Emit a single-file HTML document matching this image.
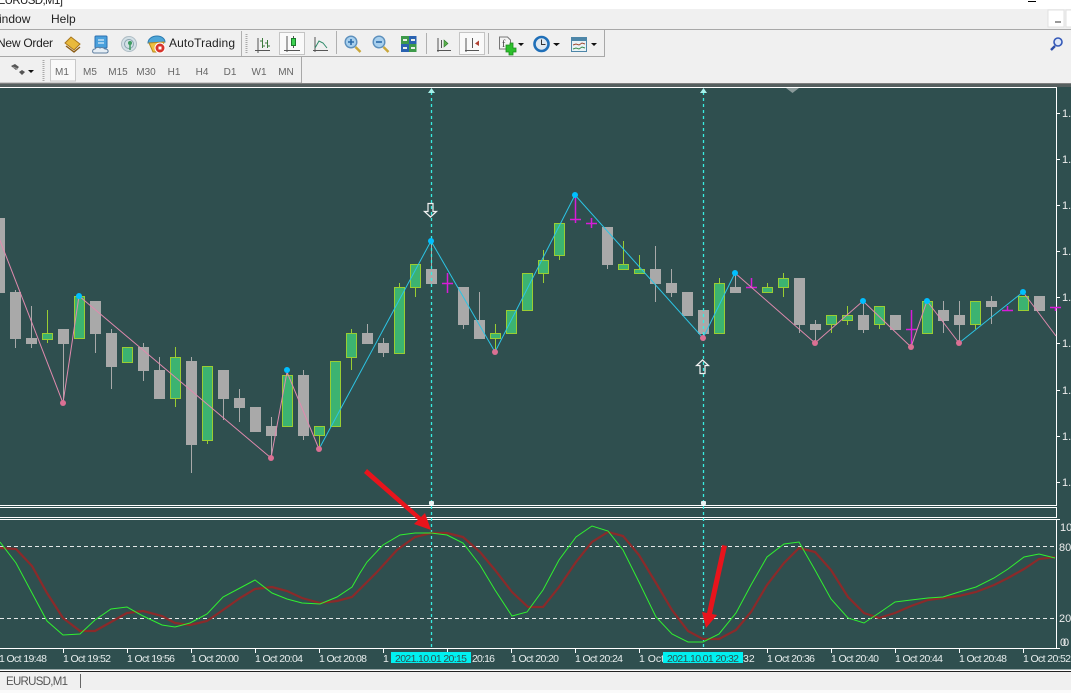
<!DOCTYPE html>
<html><head><meta charset="utf-8"><title>EURUSD,M1</title>
<style>
html,body{margin:0;padding:0;background:#fff;overflow:hidden}
body{width:1071px;height:693px}
svg{display:block;font-family:"Liberation Sans",sans-serif}
.gr{fill:#a9a9a9;stroke:#a9a9a9}
.gn{fill:#3cb371;stroke:#9acd32}
.t{font-size:10.5px;fill:#e8eeee}
.p{font-size:10px;fill:#666;text-anchor:middle}
.r{font-size:11px;fill:#eee}
</style></head><body>
<svg width="1071" height="693" viewBox="0 0 1071 693" xmlns="http://www.w3.org/2000/svg">
<!-- window chrome -->
<rect width="1071" height="693" fill="#f0f0f0"/>
<rect width="1071" height="9" fill="#fff"/>
<text x="-5" y="4" font-size="11.500" fill="#222" textLength="68">[EURUSD,M1]</text>
<rect x="1028" y="1" width="8" height="1" fill="#000"/>
<rect x="1048" y="10" width="16" height="17" fill="#fff" stroke="#e0e0e0"/>
<rect x="1055" y="21" width="6" height="2" fill="#999"/>
<rect x="1066" y="10" width="6" height="17" fill="#fff" stroke="#e0e0e0"/>
<text x="-1" y="23" font-size="12" fill="#222">indow</text>
<text x="51" y="23" font-size="12" fill="#222">Help</text>
<rect y="29" width="1071" height="1" fill="#a8a8a8"/>
<path d="M0 56.500H604.500V30" fill="none" stroke="#a8a8a8"/>
<path d="M0 83H301.500V57" fill="none" stroke="#a8a8a8"/>
<rect y="83" width="1071" height="3" fill="#808080"/>
<rect y="84" width="1071" height="3" fill="#555f5f"/>

<!-- toolbar row 1 -->
<text x="-3" y="47" font-size="12" fill="#222" textLength="56">New Order</text>
<!-- book -->
<path d="M65 43l6-6 9 7-6 6z" fill="#e8b93c" stroke="#a8761c"/><path d="M66 46l8 6 6-5" fill="none" stroke="#8a5a12" stroke-width="1.400"/>
<!-- server cloud -->
<rect x="95" y="36" width="12" height="12" rx="1" fill="#4aa0dc" stroke="#2c6fb0"/>
<path d="M98 40h6M98 43h6" stroke="#fff"/>
<path d="M94 53c-2 0-2-4 1-4 1-2 4-2 5-1 2-1 4 0 5 1 4 0 4 4 1 4z" fill="#e6eef5" stroke="#5f7fa0"/>
<!-- signal -->
<circle cx="129" cy="44" r="7.500" fill="#d3e0e6" stroke="#aebcc4"/><circle cx="129" cy="44" r="4.500" fill="none" stroke="#8ba4b0"/><circle cx="130" cy="43" r="2" fill="#3f9c62"/><path d="M130 44v6" stroke="#3f9c62" stroke-width="1.500"/>
<!-- autotrading -->
<path d="M148 43c0-4 4-7 9-7s8 3 8 6l-17 1z" fill="#4ea6d8" stroke="#2b7bb0"/>
<path d="M149 43l15-1-3 10h-8z" fill="#f0c040" stroke="#b88a20"/>
<circle cx="160" cy="48" r="5" fill="#d8342c" stroke="#fff"/><rect x="158.500" y="46.500" width="3" height="3" fill="#fff"/>
<text x="169" y="47" font-size="12" fill="#222" textLength="66">AutoTrading</text>
<rect x="241" y="31" width="1" height="25" fill="#b0b0b0"/>
<path d="M246.500 34V54" stroke="#aaa" stroke-width="2" stroke-dasharray="1 1"/>
<!-- bar chart -->
<g fill="none" stroke="#555">
<path d="M258 38V53M255 50.500H270"/><path d="M262.500 38V48M260 41h2M263 46h2M267.500 40V48M265 43h2M268 46h2" stroke="#3b7a3b"/>
</g>
<rect x="279.500" y="32.500" width="25" height="22" fill="#f9f9f9" stroke="#c4c4c4"/>
<g fill="none"><path d="M287 36V52M284 50.500H300" stroke="#555"/><path d="M293.500 36V48" stroke="#555"/><rect x="291.500" y="38.500" width="4" height="7" fill="#3cd050" stroke="#1a7a2a"/></g>
<g fill="none"><path d="M315 37V52M313 50.500H328" stroke="#555"/><path d="M315 48l4-7 4 2 4 5" stroke="#2f8a6a"/></g>
<rect x="336" y="31" width="1" height="23" fill="#b0b0b0"/>
<!-- zoom in/out -->
<circle cx="351" cy="42" r="5.800" fill="#a8d0ee" stroke="#5c8fbc" stroke-width="1.400"/><path d="M348 42h6M351 39v6" stroke="#2a6aa8" stroke-width="1.600"/><path d="M355.500 47l5 5" stroke="#c9a73a" stroke-width="2.400"/>
<circle cx="379" cy="42" r="5.800" fill="#a8d0ee" stroke="#5c8fbc" stroke-width="1.400"/><path d="M376 42h6" stroke="#2a6aa8" stroke-width="1.600"/><path d="M383.500 47l5 5" stroke="#c9a73a" stroke-width="2.400"/>
<!-- tile -->
<rect x="401" y="36" width="8" height="8" fill="#3d9a4a"/><rect x="409" y="36" width="7.500" height="8" fill="#2a62b0"/><rect x="401" y="44" width="8" height="8" fill="#2a62b0"/><rect x="409" y="44" width="7.500" height="8" fill="#3d9a4a"/>
<path d="M403 40h4M411 40h4M403 48h4M411 48h4" stroke="#e8f0e8" stroke-width="2"/>
<rect x="426" y="33" width="1" height="21" fill="#b0b0b0"/>
<g fill="none" stroke="#555"><path d="M438 38V52M437 50.500H451"/><path d="M441.500 40V48"/></g><path d="M444 40l4 3.500-4 3.500z" fill="#5ab04a" stroke="#2d7a2d" stroke-width=".6"/>
<rect x="459.500" y="32.500" width="25" height="22" fill="#f9f9f9" stroke="#c4c4c4"/>
<g fill="none" stroke="#555"><path d="M466 38V52M465 50.500H479"/><path d="M472.500 38V48"/></g><path d="M479 40.500l-4 3 4 2.500z" fill="#b04030"/>
<rect x="488" y="33" width="1" height="21" fill="#b0b0b0"/>
<!-- new chart -->
<path d="M499.500 37h8l3 3v9h-11z" fill="#f4f4f4" stroke="#777"/><text x="502" y="47" font-size="10" fill="#444" font-family="Liberation Serif">f</text>
<path d="M506 45h4v-2h3v2h0v3h3v4h-3v3h-4v-3h-3v-4h0z" fill="#2cc02c" stroke="#1c8a1c" stroke-width=".8"/>
<path d="M518 43h6l-3 3z M553 43h7l-3.500 3z M591 43h6l-3 3z" fill="#111"/>
<!-- clock -->
<circle cx="541.500" cy="44" r="7" fill="#dfe8f0" stroke="#1f6fb8" stroke-width="2.600"/><path d="M541.500 39.500V44.500H545.500" fill="none" stroke="#333"/>
<!-- indicators -->
<rect x="571.500" y="37.500" width="15" height="14" fill="#e8f2f6" stroke="#4d86a8"/><rect x="572" y="38" width="14" height="3" fill="#4d86a8"/>
<path d="M573 45l3-1 3 1 3-2 3 1" fill="none" stroke="#a04830"/><path d="M573 49l3-1 3 1 3-2 3 1" fill="none" stroke="#3a8a4a"/>
<!-- search -->
<circle cx="1058" cy="42" r="4" fill="#dfe8f8" stroke="#3358b8" stroke-width="1.600"/><path d="M1055 46l-4 4" stroke="#2c4ea8" stroke-width="2.400"/>

<!-- toolbar row 2 -->
<path d="M11 66l4-2 4 3-3 3zM19 72l3-2 3 2-3 3z" fill="#555"/><path d="M13 67l5 2" stroke="#999"/>
<path d="M28 70h6l-3 3z" fill="#111"/>
<path d="M43.500 60V81" stroke="#aaa" stroke-width="2" stroke-dasharray="1 1"/>
<rect x="50.500" y="59.500" width="25" height="21.500" fill="#f9f9f9" stroke="#c8c8c8"/>
<text class="p" x="62" y="75">M1</text><text class="p" x="90" y="75">M5</text><text class="p" x="118" y="75">M15</text><text class="p" x="146" y="75">M30</text><text class="p" x="174" y="75">H1</text><text class="p" x="202" y="75">H4</text><text class="p" x="230" y="75">D1</text><text class="p" x="259" y="75">W1</text><text class="p" x="286" y="75">MN</text>

<!-- chart background -->
<rect y="87" width="1071" height="584" fill="#2f4f4f"/>
<path d="M0 87.500H1056.500V505.500H0M0 507.500H1056.500V517.500H0M0 519.500H1056.500V648.500H0" fill="none" stroke="#fff"/>
<path d="M786 88h13l-6.500 5z" fill="#8a9a9a"/>

<!-- axis -->
<g stroke="#fff"><path d="M1057 113.500h3M1057 159.500h3M1057 205.500h3M1057 251.500h3M1057 297.500h3M1057 343.500h3M1057 390.500h3M1057 436.500h3M1057 482.500h3M1057 519.500h3M1057 648.500h3"/></g>
<text class="r" x="1062" y="117">1.</text><text class="r" x="1062" y="163">1.</text><text class="r" x="1062" y="209">1.</text><text class="r" x="1062" y="255">1.</text><text class="r" x="1062" y="301">1.</text><text class="r" x="1062" y="347">1.</text><text class="r" x="1062" y="394">1.</text><text class="r" x="1062" y="440">1.</text><text class="r" x="1062" y="486">1.</text>
<text class="r" x="1060" y="531">10</text><text class="r" x="1059" y="551">80</text><text class="r" x="1059" y="622">20</text><text class="r" x="1060" y="646">0</text><text class="r" x="1063" y="646">0</text>

<!-- wicks -->
<path stroke="#a9a9a9" fill="none" d="M15.500 290V348M31.500 306V348M63.500 329V403M95.500 301V353M111.500 329V389M143.500 343V381M159.500 357V398M191.500 357V473M223.500 370V420M239.500 389V422M271.500 417V457M303.500 370V440M367.500 324V343M383.500 338V357M431.500 241V283M463.500 287V329M479.500 292V338M607.500 227V269M655.500 246V302M671.500 269V297M703.500 310V338M735.500 273V292M799.500 278V333M815.500 320V343M863.500 301V333M943.500 301V333M959.500 301V343M991.500 296V324"/>
<path stroke="#9acd32" fill="none" d="M47.500 310V343M175.500 347V407M207.500 440V444M287.500 372V426M319.500 426V448M351.500 329V370M399.500 283V353M415.500 264V297M495.500 324V352M543.500 250V283M559.500 223V260M623.500 241V269M639.500 255V273M719.500 278V333M767.500 283V292M783.500 273V297M831.500 315V333M847.500 306V325M879.500 306V329M975.500 301V329"/>

<!-- gray bodies -->
<g class="gr">
<rect x="-5.500" y="218.500" width="10" height="74"/><rect x="10.500" y="292.500" width="10" height="46"/><rect x="26.500" y="338.500" width="10" height="5"/><rect x="58.500" y="329.500" width="10" height="14"/><rect x="90.500" y="301.500" width="10" height="32"/><rect x="106.500" y="333.500" width="10" height="33"/><rect x="138.500" y="347.500" width="10" height="23"/><rect x="154.500" y="370.500" width="10" height="28"/><rect x="186.500" y="361.500" width="10" height="83"/><rect x="218.500" y="370.500" width="10" height="28"/><rect x="234.500" y="398.500" width="10" height="9"/><rect x="250.500" y="407.500" width="10" height="24"/><rect x="266.500" y="426.500" width="10" height="9"/><rect x="298.500" y="375.500" width="10" height="60"/><rect x="362.500" y="333.500" width="10" height="10"/><rect x="378.500" y="343.500" width="10" height="9"/><rect x="426.500" y="269.500" width="10" height="14"/><rect x="458.500" y="287.500" width="10" height="37"/><rect x="474.500" y="320.500" width="10" height="18"/><rect x="602.500" y="227.500" width="10" height="37"/><rect x="650.500" y="269.500" width="10" height="14"/><rect x="666.500" y="283.500" width="10" height="9"/><rect x="682.500" y="292.500" width="10" height="23"/><rect x="698.500" y="310.500" width="10" height="23"/><rect x="730.500" y="287.500" width="10" height="5"/><rect x="794.500" y="278.500" width="10" height="46"/><rect x="810.500" y="324.500" width="10" height="5"/><rect x="858.500" y="315.500" width="10" height="14"/><rect x="890.500" y="315.500" width="10" height="14"/><rect x="938.500" y="310.500" width="10" height="10"/><rect x="954.500" y="315.500" width="10" height="9"/><rect x="986.500" y="301.500" width="10" height="5"/><rect x="1034.500" y="296.500" width="10" height="14"/>
</g>
<!-- green bodies -->
<g class="gn">
<rect x="42.500" y="333.500" width="10" height="6"/><rect x="74.500" y="296.500" width="10" height="42"/><rect x="122.500" y="347.500" width="10" height="15"/><rect x="170.500" y="357.500" width="10" height="41"/><rect x="202.500" y="366.500" width="10" height="74"/><rect x="282.500" y="375.500" width="10" height="51"/><rect x="314.500" y="426.500" width="10" height="9"/><rect x="330.500" y="361.500" width="10" height="65"/><rect x="346.500" y="333.500" width="10" height="24"/><rect x="394.500" y="287.500" width="10" height="66"/><rect x="410.500" y="264.500" width="10" height="23"/><rect x="490.500" y="333.500" width="10" height="5"/><rect x="506.500" y="310.500" width="10" height="23"/><rect x="522.500" y="273.500" width="10" height="37"/><rect x="538.500" y="260.500" width="10" height="13"/><rect x="554.500" y="223.500" width="10" height="32"/><rect x="618.500" y="264.500" width="10" height="5"/><rect x="634.500" y="269.500" width="10" height="4"/><rect x="714.500" y="283.500" width="10" height="50"/><rect x="762.500" y="287.500" width="10" height="5"/><rect x="778.500" y="278.500" width="10" height="9"/><rect x="826.500" y="315.500" width="10" height="9"/><rect x="842.500" y="315.500" width="10" height="5"/><rect x="874.500" y="306.500" width="10" height="18"/><rect x="922.500" y="301.500" width="10" height="32"/><rect x="970.500" y="301.500" width="10" height="23"/><rect x="1018.500" y="296.500" width="10" height="14"/>
</g>
<!-- doji -->
<path stroke="#d81cd8" stroke-width="1.500" fill="none" d="M447.500 273V293M442 283.500H453M575.500 195V223M570 219.500H581M591.500 218V228M586 223.500H597M751.500 278V288M746 287.500H757M911.500 310V347M906 329.500H917M1007.500 306V310M1002 310.500H1013M1055.500 307V311M1050 307.500H1061"/>

<!-- dashed verticals -->
<path d="M431.500 92V648M703.500 92V648" stroke="#38ece0" stroke-width="1.300" stroke-dasharray="3 3"/>
<path d="M428 93l3.500-5 3.500 5zM700 93l3.500-5 3.500 5z" fill="#a8f0ea"/>
<rect x="429" y="501" width="5" height="4" rx="1" fill="#e8f4f4"/><rect x="701" y="501" width="5" height="4" rx="1" fill="#e8f4f4"/>

<!-- zigzag -->
<path d="M-6 225L63 403L79 296L271 458L287 372L319 449M735 273L815 343L863 301L911 347L927 301L959 343M1023 292L1056 336" fill="none" stroke="#e08aae"/>
<path d="M319 449L431 241L495 352L575 195L703 338L735 273M959 343L1023 292" fill="none" stroke="#2cc4e4"/>
<g fill="#db7093"><circle cx="63" cy="403" r="3"/><circle cx="271" cy="458" r="3"/><circle cx="319" cy="449" r="3"/><circle cx="495" cy="352" r="3"/><circle cx="703" cy="338" r="3"/><circle cx="815" cy="343" r="3"/><circle cx="911" cy="347" r="3"/><circle cx="959" cy="343" r="3"/></g>
<g fill="#00bfff"><circle cx="79" cy="296" r="3"/><circle cx="287" cy="370" r="3"/><circle cx="431" cy="241" r="3"/><circle cx="575" cy="195" r="3"/><circle cx="735" cy="273" r="3"/><circle cx="863" cy="301" r="3"/><circle cx="927" cy="301" r="3"/><circle cx="1023" cy="292" r="3"/></g>
<!-- hollow arrows -->
<path d="M428 203.500h5v8h3.500l-6 5.500-6-5.500h3.500z" fill="none" stroke="#f2f2f2" stroke-width="1.200"/>
<path d="M700 373.500h5v-8h3.500l-6-5.500-6 5.500h3.500z" fill="none" stroke="#f2f2f2" stroke-width="1.200"/>

<!-- levels -->
<path d="M0 546.500H1056M0 618.500H1056" stroke="#e4e8e8" stroke-dasharray="4 3"/>

<!-- stochastic -->
<path fill="none" stroke="#8b2a2a" stroke-width="2.200" d="M0 548L16 549L32 566L47 593L63 618L80 631L95 631L111 622L127 613L143 611L162 616L175 623L190 625L207 621L223 610L240 598L255 589L272 587L287 591L302 598L320 603L337 601L352 597L360 589L377 572L397 550L415 537L431 533L447 533L463 537L480 552L495 570L512 592L528 607L543 607L559 587L576 562L592 542L608 532L623 536L639 555L656 583L672 610L688 631L703 639L719 639L736 630L751 612L767 585L784 563L799 548L815 552L831 570L848 597L864 613L879 618L895 613L911 606L928 600L943 598L959 596L976 592L994 585L1008 578L1024 569L1039 559L1055 557"/>
<path fill="none" stroke="#30f030" d="M0 542L16 563L32 593L47 621L63 635L80 634L95 620L111 609L127 607L143 616L162 625L175 627L190 623L207 614L223 597L240 588L255 580L272 593L287 599L302 603L320 604L337 597L352 587L360 573L367 562L383 545L400 535L415 533L431 533L447 535L463 543L480 565L495 590L512 616L527 612L543 590L559 560L576 537L592 526L608 531L623 550L639 582L656 617L672 634L688 642L703 642L719 634L736 613L751 585L767 557L784 544L799 542L815 570L831 599L848 618L864 623L879 613L895 602L911 600L928 598L943 597L959 592L976 587L994 578L1008 569L1024 557L1039 554L1055 558"/>

<!-- red annotation arrows -->
<path d="M364 473L367 469L421 517L425 513L431 530L414 524L418 520Z" fill="#e8141c"/>
<path d="M722 545L727 546L712 614L717 615L706 628L702 612L707 613Z" fill="#e8141c"/>

<!-- time axis -->
<path stroke="#fff" d="M63.500 649v4M127.500 649v4M191.500 649v4M255.500 649v4M319.500 649v4M383.500 649v4M447.500 649v4M511.500 649v4M575.500 649v4M639.500 649v4M767.500 649v4M831.500 649v4M895.500 649v4M959.500 649v4M1023.500 649v4"/>
<text class="t" x="-1" y="662" textLength="48">1 Oct 19:48</text>
<text class="t" x="63" y="662" textLength="48">1 Oct 19:52</text>
<text class="t" x="127" y="662" textLength="48">1 Oct 19:56</text>
<text class="t" x="191" y="662" textLength="48">1 Oct 20:00</text>
<text class="t" x="255" y="662" textLength="48">1 Oct 20:04</text>
<text class="t" x="319" y="662" textLength="48">1 Oct 20:08</text>
<text class="t" x="383" y="662">1</text>
<text class="t" x="472" y="662" textLength="23">20:16</text>
<text class="t" x="511" y="662" textLength="48">1 Oct 20:20</text>
<text class="t" x="575" y="662" textLength="48">1 Oct 20:24</text>
<text class="t" x="639" y="662">1 Oct</text>
<text class="t" x="743" y="662">32</text>
<text class="t" x="767" y="662" textLength="48">1 Oct 20:36</text>
<text class="t" x="831" y="662" textLength="48">1 Oct 20:40</text>
<text class="t" x="895" y="662" textLength="48">1 Oct 20:44</text>
<text class="t" x="959" y="662" textLength="48">1 Oct 20:48</text>
<text class="t" x="1023" y="662" textLength="48">1 Oct 20:52</text>
<rect x="391" y="652" width="80" height="11" fill="#00f0f0"/>
<text x="395" y="662" font-size="10.500" fill="#2f4f4f" textLength="72">2021.10.01 20:15</text>
<rect x="663" y="652" width="80" height="11" fill="#00f0f0"/>
<text x="667" y="662" font-size="10.500" fill="#2f4f4f" textLength="72">2021.10.01 20:32</text>

<!-- status bar -->
<rect y="669.500" width="1071" height="1.500" fill="#fff"/>
<rect y="671" width="1071" height="1" fill="#222"/>
<rect y="672" width="1071" height="18" fill="#f0f0f0"/>
<rect y="690" width="1071" height="3" fill="#fafafa"/>
<text x="6" y="685" font-size="11.500" fill="#555" textLength="62">EURUSD,M1</text>
<rect x="80" y="674" width="1" height="14" fill="#666"/>
</svg>
</body></html>
